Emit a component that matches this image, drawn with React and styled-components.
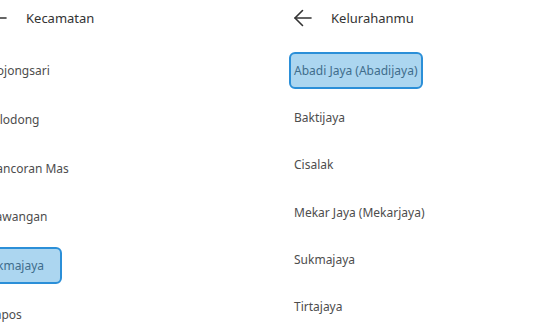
import React from 'react'
import styled, { createGlobalStyle } from 'styled-components'

const Global = createGlobalStyle`
    html, body {
        margin: 0;
        padding: 0;
        background: #ffffff;
        overflow: hidden;
    }
    body {
        font-family: "Noto Sans", "Open Sans", sans-serif;
        width: 560px;
        height: 336px;
    }
`

const kecamatan = ['Bojongsari', 'Cilodong', 'Pancoran Mas', 'Sawangan', 'Sukmajaya', 'Tapos']
const kelurahan = ['Abadi Jaya (Abadijaya)', 'Baktijaya', 'Cisalak', 'Mekar Jaya (Mekarjaya)', 'Sukmajaya', 'Tirtajaya']

function BackArrow() {
    return (
        <svg width="24" height="24" viewBox="0 0 24 24" fill="none" stroke="#333" strokeWidth="1.6" strokeLinecap="round" strokeLinejoin="round">
            <path d="M20 12H4" />
            <path d="M11.5 4.5L4 12l7.5 7.5" />
        </svg>
    )
}

function Panel({ title, items, selected, gap, shift, padRight }) {
    return (
        <Wrap>
            <Header>
                <Back><BackArrow /></Back>
                <Title>{title}</Title>
            </Header>
            <List gap={gap}>
                {items.map((n, i) => (
                    <Item key={i} active={n === selected} shift={shift} padRight={padRight}>{n}</Item>
                ))}
            </List>
        </Wrap>
    )
}

export default function App() {
    return (
        <>
            <Global />
            <Stage>
                <Panel title="Kecamatan" items={kecamatan} selected="Sukmajaya" gap={11.8} shift={-6} padRight={16} />
                <Panel title="Kelurahanmu" items={kelurahan} selected="Abadi Jaya (Abadijaya)" gap={10.2} shift={0} padRight={3} />
            </Stage>
        </>
    )
}

const Stage = styled.div`
    display: flex;
    margin-left: -25px;
    width: 610px;
    height: 336px;
`
const Wrap = styled.div`
    width: 305px;
    flex: none;
    padding-left: 9px;
    box-sizing: border-box;
`
const Header = styled.div`
    display: flex;
    align-items: center;
    height: 36px;
    margin-bottom: 16px;
`
const Back = styled.div`
    width: 24px;
    height: 24px;
    margin-left: 2px;
    display: flex;
    margin-right: 16px;
`
const Title = styled.div`
    font-size: 13px;
    color: #333333;
`
const List = styled.div`
    display: flex;
    flex-direction: column;
    align-items: flex-start;
    gap: ${p => p.gap}px;
`
const Item = styled.div`
    height: 37px;
    box-sizing: border-box;
    display: flex;
    align-items: center;
    padding: 0 ${p => p.active ? p.padRight : 3}px 0 3px;
    margin-left: ${p => p.active ? p.shift : 0}px;
    border: 2.5px solid ${p => p.active ? '#2b8fd8' : 'transparent'};
    background: ${p => p.active ? '#acd6f0' : 'transparent'};
    border-radius: 6px;
    font-size: 12px;
    color: ${p => p.active ? '#3f6d8c' : '#4d4d4d'};
`
